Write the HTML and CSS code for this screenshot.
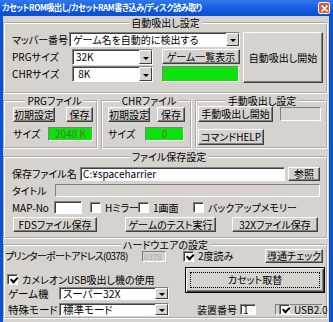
FILE: index.html
```html
<!doctype html>
<html lang="ja">
<head>
    <meta charset="UTF-8">
    <title>カセットROM吸出し</title>
    <link rel="stylesheet" href="styles.css">
</head>
<body>
    <div class="window">
        <div class="titlebar">
            <span class="title">カセットROM吸出し/カセットRAM書き込み/ディスク読み取り</span>
            <span class="close"><svg width="9" height="9" viewBox="0 0 9 9"><path d="M1.5 1.5 L7.5 7.5 M7.5 1.5 L1.5 7.5" stroke="#fff" stroke-width="1.6"/></svg></span>
        </div>
        <div class="client">
            <fieldset class="group g-auto">
                <legend>自動吸出し設定</legend>
                <div class="auto-body">
                    <div class="auto-left">
                        <div class="row r-mapper">
                            <span class="lbl l-mapper">マッパー番号</span>
                            <div class="combo c-mapper"><span class="val">ゲーム名を自動的に検出する</span><span class="arrow"></span></div>
                        </div>
                        <div class="row r-prg">
                            <span class="lbl l-size">PRGサイズ</span>
                            <div class="combo c-size"><span class="val">32K</span><span class="arrow"></span></div>
                            <button class="btn b-list">ゲーム一覧表示</button>
                        </div>
                        <div class="row r-chr">
                            <span class="lbl l-size">CHRサイズ</span>
                            <div class="combo c-size"><span class="val">&nbsp;8K</span><span class="arrow"></span></div>
                            <div class="lamp lamp-wide"></div>
                        </div>
                    </div>
                    <button class="btn b-auto">自動吸出し開始</button>
                </div>
            </fieldset>

            <div class="files">
                <fieldset class="group g-prg">
                    <legend>PRGファイル</legend>
                    <div class="row r-fbtn">
                        <button class="btn b-init">初期設定</button>
                        <button class="btn b-save">保存</button>
                    </div>
                    <div class="row r-fsize">
                        <span class="lbl l-fsize">サイズ</span>
                        <div class="lamp lamp-prg">2048 K</div>
                    </div>
                </fieldset>
                <fieldset class="group g-chr">
                    <legend>CHRファイル</legend>
                    <div class="row r-fbtn">
                        <button class="btn b-init">初期設定</button>
                        <button class="btn b-save">保存</button>
                    </div>
                    <div class="row r-fsize">
                        <span class="lbl l-fsize">サイズ</span>
                        <div class="lamp lamp-chr">0</div>
                    </div>
                </fieldset>
                <fieldset class="group g-manual">
                    <legend>手動吸出し設定</legend>
                    <div class="row r-manual">
                        <button class="btn b-manual">手動吸出し開始</button>
                        <div class="field f-manual"></div>
                    </div>
                    <button class="btn b-help">コマンドHELP</button>
                </fieldset>
            </div>

            <fieldset class="group g-save">
                <legend>ファイル保存設定</legend>
                <div class="row r-file">
                    <span class="lbl l-file">保存ファイル名</span>
                    <div class="field f-file">C:¥spaceharrier</div>
                    <button class="btn b-ref">参照</button>
                </div>
                <div class="row r-title">
                    <span class="lbl l-title">タイトル</span>
                    <div class="field f-title"></div>
                </div>
                <div class="row r-map">
                    <span class="lbl l-map">MAP-No</span>
                    <div class="field f-map"></div>
                    <label class="chk ck-mirror"><span class="box"></span>Hミラー</label>
                    <label class="chk ck-one"><span class="box"></span>1画面</label>
                    <label class="chk ck-backup"><span class="box"></span>バックアップメモリー</label>
                </div>
                <div class="row r-save">
                    <button class="btn b-fds">FDSファイル保存</button>
                    <button class="btn b-test">ゲームのテスト実行</button>
                    <button class="btn b-32x">32Xファイル保存</button>
                </div>
            </fieldset>

            <fieldset class="group g-hw">
                <legend>ハードウエアの設定</legend>
                <div class="row r-port">
                    <span class="lbl l-port">プリンターポートアドレス(0378)</span>
                    <div class="field f-port">0378</div>
                    <label class="chk ck-twice"><span class="box on"></span>2度読み</label>
                    <button class="btn b-check">導通チェック</button>
                </div>
                <div class="hw-body">
                    <div class="hw-left">
                        <label class="chk ck-usb"><span class="box on"></span>カメレオンUSB吸出し機の使用</label>
                        <div class="row r-machine">
                            <span class="lbl l-hw">ゲーム機</span>
                            <div class="combo c-hw"><span class="val">スーパー32X</span><span class="arrow"></span></div>
                        </div>
                        <div class="row r-mode">
                            <span class="lbl l-hw">特殊モード</span>
                            <div class="combo c-hw"><span class="val">標準モード</span><span class="arrow"></span></div>
                        </div>
                    </div>
                    <div class="hw-right">
                        <button class="btn b-swap">カセット取替</button>
                        <div class="row r-dev">
                            <span class="lbl l-dev">装置番号</span>
                            <div class="field f-dev">1</div>
                            <label class="chk ck-usb2"><span class="box on"></span>USB2.0</label>
                        </div>
                    </div>
                </div>
            </fieldset>
        </div>
    </div>
</body>
</html>
```

FILE: styles.css
```css
* {
    box-sizing: border-box;
}
body {
    margin: 0;
    width: 333px;
    height: 322px;
    overflow: hidden;
    font-family: "Noto Sans CJK JP", "Noto Sans", sans-serif;
    font-size: 10px;
    line-height: 12px;
    font-feature-settings: "palt";
    color: #000;
    background: #0b52d6;
}
.window {
    width: 333px;
    height: 322px;
    display: flex;
    flex-direction: column;
    background: #0b52d6;
}
.titlebar {
    height: 16px;
    display: flex;
    align-items: center;
    padding: 0 2px 0 2px;
    color: #fff;
    font-weight: bold;
    font-size: 9px;
    letter-spacing: -0.5px;
    background: linear-gradient(#2f78ee, #0d55dc 70%, #0a4fd2);
}
.title {
    flex: 1;
    white-space: nowrap;
    line-height: 16px;
    transform: scaleX(0.9);
    transform-origin: left center;
}
.close {
    width: 12px;
    height: 12px;
    margin-right: 1px;
    display: flex;
    align-items: center;
    justify-content: center;
    background: #dc5a36;
    border: 1px solid #fff;
    border-radius: 2px;
}
.client {
    flex: 1;
    margin: 0 4px 0 3px;
    padding: 1px 1px 0 0;
    background: #d6d3ce;
}

/* group boxes */
.group {
    margin: 0;
    padding: 0;
    min-width: 0;
    border: 2px groove #fff;
}
legend {
    margin: 0 auto;
    padding: 0 2px;
    height: 12px;
    line-height: 12px;
}
.row {
    display: flex;
    align-items: center;
}
.lbl {
    white-space: nowrap;
    flex: none;
}

/* controls */
.btn {
    appearance: none;
    margin: 0;
    padding: 0;
    font: inherit;
    font-feature-settings: "palt";
    color: #000;
    background: #d6d3ce;
    border: 1px solid;
    border-color: #fff #404040 #404040 #fff;
    box-shadow: inset -1px -1px #808080;
    display: flex;
    align-items: center;
    justify-content: center;
    white-space: nowrap;
    flex: none;
}
.combo {
    display: flex;
    align-items: stretch;
    background: #fff;
    border: 1px solid;
    border-color: #808080 #fff #fff #808080;
    box-shadow: inset 1px 1px #404040;
    flex: none;
}
.combo .val {
    flex: 1;
    padding-left: 3px;
    display: flex;
    align-items: center;
    white-space: nowrap;
    overflow: hidden;
}
.combo .arrow {
    width: 13px;
    background: #d6d3ce;
    border: 1px solid;
    border-color: #fff #404040 #404040 #fff;
    display: flex;
    align-items: center;
    justify-content: center;
}
.combo .arrow::after {
    content: "";
    border-left: 3px solid transparent;
    border-right: 3px solid transparent;
    border-top: 3px solid #000;
    margin-top: 2px;
}
.field {
    background: #fff;
    border: 1px solid;
    border-color: #808080 #fff #fff #808080;
    box-shadow: inset 1px 1px #404040;
    padding-left: 2px;
    display: flex;
    align-items: center;
    white-space: nowrap;
    flex: none;
}
.lamp {
    background: #0ce20c;
    border: 1px solid;
    border-color: #808080 #fff #fff #808080;
    display: flex;
    align-items: center;
    justify-content: center;
    color: #4d7a30;
    flex: none;
}
.chk {
    display: flex;
    align-items: center;
    white-space: nowrap;
    flex: none;
}
.chk .box {
    width: 11px;
    height: 11px;
    margin-right: 4px;
    background: #fff;
    border: 1px solid;
    border-color: #808080 #fff #fff #808080;
    box-shadow: inset 1px 1px #404040;
    position: relative;
    flex: none;
}
.chk .box.on::after {
    content: "";
    position: absolute;
    left: 2px;
    top: 1px;
    width: 5px;
    height: 3px;
    border-left: 2px solid #000;
    border-bottom: 2px solid #000;
    transform: rotate(-45deg) translate(0px, 1px);
}

/* 自動吸出し設定 */
.g-auto {
    width: 325px;
    height: 77px;
}
.auto-body {
    display: flex;
    padding: 3px 0 0 7px;
}
.auto-left {
    width: 228px;
    display: flex;
    flex-direction: column;
}
.r-mapper {
    height: 15px;
}
.l-mapper {
    width: 57px;
}
.c-mapper {
    width: 171px;
    height: 15px;
}
.r-prg {
    margin-top: 2px;
    height: 16px;
    align-items: flex-start;
}
.r-chr {
    margin-top: 1px;
    height: 16px;
}
.l-size {
    width: 60px;
    align-self: center;
}
.c-size {
    width: 81px;
    height: 16px;
}
.b-list {
    margin-left: 9px;
    width: 78px;
    height: 15px;
}
.lamp-wide {
    margin-left: 9px;
    width: 77px;
    height: 16px;
}
.b-auto {
    margin: 0 0 0 3px;
    width: 80px;
    height: 51px;
}

/* ファイル */
.files {
    display: flex;
    gap: 3px;
    margin-top: 1px;
}
.files .group {
    height: 54px;
}
.g-prg {
    width: 95px;
    padding-left: 8px;
}
.g-chr {
    width: 91px;
    padding-left: 5px;
}
.g-manual {
    width: 133px;
    padding-left: 1px;
}
.r-fbtn {
    height: 15px;
}
.b-init {
    width: 42px;
    height: 15px;
}
.b-save {
    height: 15px;
}
.g-prg .b-save {
    margin-left: 11px;
    width: 27px;
}
.g-chr .b-save {
    margin-left: 7px;
    width: 28px;
}
.r-fsize {
    margin-top: 5px;
    height: 14px;
}
.g-prg .l-fsize {
    width: 35px;
}
.g-chr .l-fsize {
    width: 37px;
}
.lamp-prg {
    width: 45px;
    height: 14px;
}
.lamp-chr {
    width: 39px;
    height: 14px;
}
.r-manual {
    margin-top: -1px;
    height: 16px;
}
.b-manual {
    width: 75px;
    height: 16px;
}
.f-manual {
    margin-left: 7px;
    width: 41px;
    height: 14px;
    background: #d6d3ce;
    box-shadow: none;
}
.b-help {
    margin-top: 7px;
    width: 66px;
    height: 16px;
}

/* ファイル保存設定 */
.g-save {
    width: 325px;
    height: 88px;
    margin-top: 2px;
    padding: 4px 0 0 7px;
}
.r-file {
    height: 14px;
}
.l-file {
    width: 68px;
}
.f-file {
    width: 205px;
    height: 14px;
}
.b-ref {
    margin-left: 3px;
    width: 32px;
    height: 14px;
}
.r-title {
    margin-top: 3px;
    height: 13px;
}
.l-title {
    width: 43px;
}
.f-title {
    width: 265px;
    height: 13px;
    background: #d6d3ce;
    box-shadow: none;
}
.r-map {
    margin-top: 4px;
    height: 13px;
}
.l-map {
    width: 42px;
}
.f-map {
    width: 28px;
    height: 13px;
}
.ck-mirror {
    margin-left: 8px;
    width: 48px;
}
.ck-one {
    width: 55px;
}
.r-save {
    margin-top: 3px;
    padding-left: 1px;
}
.r-save .btn {
    height: 15px;
}
.b-fds {
    width: 84px;
}
.b-test {
    margin-left: 28px;
    width: 91px;
}
.b-32x {
    margin-left: 16px;
    width: 86px;
}

/* ハードウエアの設定 */
.g-hw {
    width: 325px;
    height: 79px;
    margin-top: 1px;
}
.g-hw legend {
    height: 10px;
    line-height: 10px;
}
.r-port {
    margin-top: -1px;
    height: 14px;
    padding-right: 3px;
}
.l-port {
    width: 137px;
    letter-spacing: -0.75px;
}
.f-port {
    width: 24px;
    height: 11px;
    padding-left: 1px;
    background: #d6d3ce;
    color: #a8a6a0;
    box-shadow: none;
    font-size: 8px;
    line-height: 9px;
}
.ck-twice {
    margin-left: 17px;
}
.b-check {
    margin-left: auto;
    width: 58px;
    height: 14px;
}
.hw-body {
    display: flex;
}
.hw-left {
    width: 180px;
    display: flex;
    flex-direction: column;
    padding-left: 2px;
}
.ck-usb {
    margin-top: 11px;
    height: 11px;
    line-height: 11px;
}
.r-machine {
    margin-top: 2px;
    height: 13px;
}
.r-mode {
    margin-top: 3px;
    height: 12px;
}
.l-hw {
    width: 51px;
    margin-left: 1px;
    font-size: 10.5px;
    line-height: 11px;
}
.c-hw {
    width: 110px;
    height: 13px;
}
.c-hw .val {
    font-size: 10.5px;
    line-height: 11px;
    overflow: visible;
}
.hw-right {
    width: 140px;
    display: flex;
    flex-direction: column;
}
.b-swap {
    margin-top: 4px;
    width: 140px;
    height: 26px;
    border: 1px solid #000;
    box-shadow: inset 1px 1px #fff, inset -1px -1px #404040, inset -2px -2px #808080;
    position: relative;
}
.b-swap::after {
    content: "";
    position: absolute;
    inset: 4px;
    border: 1px dotted #000;
}
.r-dev {
    margin-top: 11px;
    height: 11px;
}
.l-dev {
    margin-left: 12px;
    width: 43px;
}
.f-dev {
    width: 16px;
    height: 11px;
}
.ck-usb2 {
    margin-left: 19px;
    width: 48px;
    height: 11px;
    padding-left: 3px;
    border: 1px solid;
    border-color: #808080 #fff #fff #808080;
}
```
